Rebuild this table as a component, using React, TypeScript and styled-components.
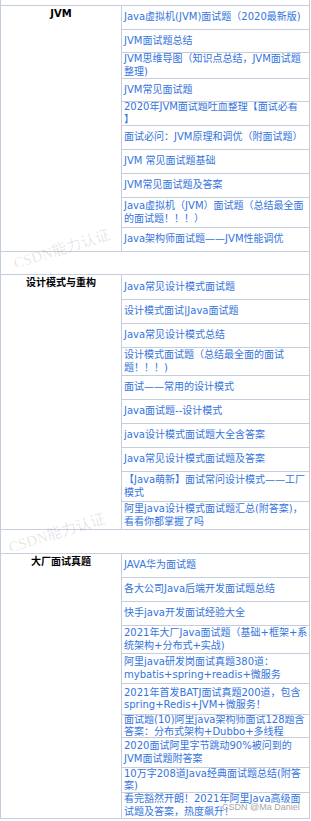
import { Fragment } from "react";
import styled, { createGlobalStyle } from "styled-components";

const LINE = "#c6cddd";

type Link = { text: string; h: number };
type Group = { title: string; links: Link[] };

const groups: Group[] = [
  {
    title: "JVM",
    links: [
      { text: "Java虚拟机(JVM)面试题（2020最新版)", h: 24 },
      { text: "JVM面试题总结", h: 23 },
      { text: "JVM思维导图（知识点总结，JVM面试题整理)", h: 26 },
      { text: "JVM常见面试题", h: 23 },
      { text: "2020年JVM面试题吐血整理【面试必看\u200B】", h: 24 },
      { text: "面试必问：JVM原理和调优（附面试题）", h: 24 },
      { text: "JVM 常见面试题基础", h: 24 },
      { text: "JVM常见面试题及答案", h: 24 },
      { text: "Java虚拟机（JVM）面试题（总结最全面的面试题！！！）", h: 30 },
      { text: "Java架构师面试题——JVM性能调优", h: 24 },
    ],
  },
  {
    title: "设计模式与重构",
    links: [
      { text: "Java常见设计模式面试题", h: 25 },
      { text: "设计模式面试|Java面试题", h: 24 },
      { text: "Java常见设计模式总结", h: 24 },
      { text: "设计模式面试题（总结最全面的面试题！！！)", h: 28 },
      { text: "面试——常用的设计模式", h: 24 },
      { text: "Java面试题--设计模式", h: 24 },
      { text: "java设计模式面试题大全含答案", h: 24 },
      { text: "Java常见设计模式面试题及答案", h: 24 },
      { text: "【Java萌新】面试常问设计模式——工厂模式", h: 30 },
      { text: "阿里java设计模式面试题汇总(附答案)，看看你都掌握了吗", h: 28 },
    ],
  },
  {
    title: "大厂面试真题",
    links: [
      { text: "JAVA华为面试题", h: 24 },
      { text: "各大公司Java后端开发面试题总结", h: 24 },
      { text: "快手java开发面试经验大全", h: 24 },
      { text: "2021年大厂Java面试题（基础+框架+系统架构+分布式+实战)", h: 28 },
      { text: "阿里java研发岗面试真题380道：mybatis+spring+readis+微服务", h: 30 },
      { text: "2021年首发BATJ面试真题200道，包含spring+Redis+JVM+微服务！", h: 31 },
      { text: "面试题(10)阿里java架构师面试128题含答案：分布式架构+Dubbo+多线程", h: 23 },
      { text: "2020面试阿里字节跳动90%被问到的JVM面试题附答案", h: 30 },
      { text: "10万字208道Java经典面试题总结(附答案)", h: 25 },
      { text: "看完豁然开朗！2021年阿里Java高级面试题及答案，热度飙升！", h: 26 },
    ],
  },
];

// empty rows between the groups
const gaps = [23, 24];

const App = () => {
  return (
    <Page>
      <GlobalStyle />
      <Table>
        <CutRow />
        {groups.map((group, i) => (
          <Fragment key={group.title}>
            <Section>
              <Label>{group.title}</Label>
              <Links>
                {group.links.map((link) => (
                  <LinkRow key={link.text} $h={link.h}>
                    <LinkText>{link.text}</LinkText>
                  </LinkRow>
                ))}
              </Links>
            </Section>
            {i < gaps.length && <GapRow $h={gaps[i]} />}
          </Fragment>
        ))}
      </Table>
      <Stamp $x={12} $y={241}>CSDN能力认证</Stamp>
      <Stamp $x={7} $y={525}>CSDN能力认证</Stamp>
      <Credit>CSDN @Ma Daniel</Credit>
    </Page>
  );
};

const GlobalStyle = createGlobalStyle`
  html, body {
    margin: 0;
    padding: 0;
    background: #fff;
  }
  body {
    font-family: "DejaVu Sans", "Noto Sans CJK SC", sans-serif;
  }
`;

const Page = styled.div`
  position: relative;
  width: 311px;
  height: 821px;
  overflow: hidden;
`;

const Table = styled.div`
  width: 310px;
  box-sizing: border-box;
  border-left: 1px solid ${LINE};
  border-right: 1px solid ${LINE};
  display: flex;
  flex-direction: column;
`;

const CutRow = styled.div`
  height: 6px;
  box-sizing: border-box;
  border-bottom: 1px solid ${LINE};
`;

const GapRow = styled.div<{ $h: number }>`
  height: ${(p) => p.$h}px;
  box-sizing: border-box;
  border-bottom: 1px solid ${LINE};
`;

const Section = styled.div`
  display: flex;
`;

const Label = styled.div`
  width: 120px;
  flex-shrink: 0;
  border-right: 1px solid ${LINE};
  border-bottom: 1px solid ${LINE};
  padding-top: 2px;
  text-align: center;
  font-size: 10px;
  line-height: 12.5px;
  font-weight: bold;
  color: #000;
`;

const Links = styled.div`
  flex: 1;
  display: flex;
  flex-direction: column;
`;

const LinkRow = styled.div<{ $h: number }>`
  height: ${(p) => p.$h}px;
  box-sizing: border-box;
  border-bottom: 1px solid ${LINE};
  padding: 0 1.5px 0 2px;
  display: flex;
  align-items: center;
  overflow: hidden;
`;

const LinkText = styled.a`
  font-size: 10px;
  line-height: 12.5px;
  color: #3474dd;
  text-decoration: none;
  text-spacing-trim: space-all;
`;

const Stamp = styled.span<{ $x: number; $y: number }>`
  position: absolute;
  left: ${(p) => p.$x}px;
  top: ${(p) => p.$y}px;
  font-family: "Liberation Serif", "Noto Sans CJK SC", serif;
  font-size: 15px;
  line-height: 17px;
  white-space: nowrap;
  color: rgba(0, 0, 0, 0.11);
  transform: rotate(-17deg);
  pointer-events: none;
`;

const Credit = styled.span`
  position: absolute;
  left: 222px;
  top: 802px;
  font-family: "Liberation Sans", Arial, sans-serif;
  font-size: 9px;
  line-height: 11px;
  white-space: nowrap;
  color: #a6a6a6;
  text-shadow: 0 0 1px #fff;
  pointer-events: none;
`;

export default App;
